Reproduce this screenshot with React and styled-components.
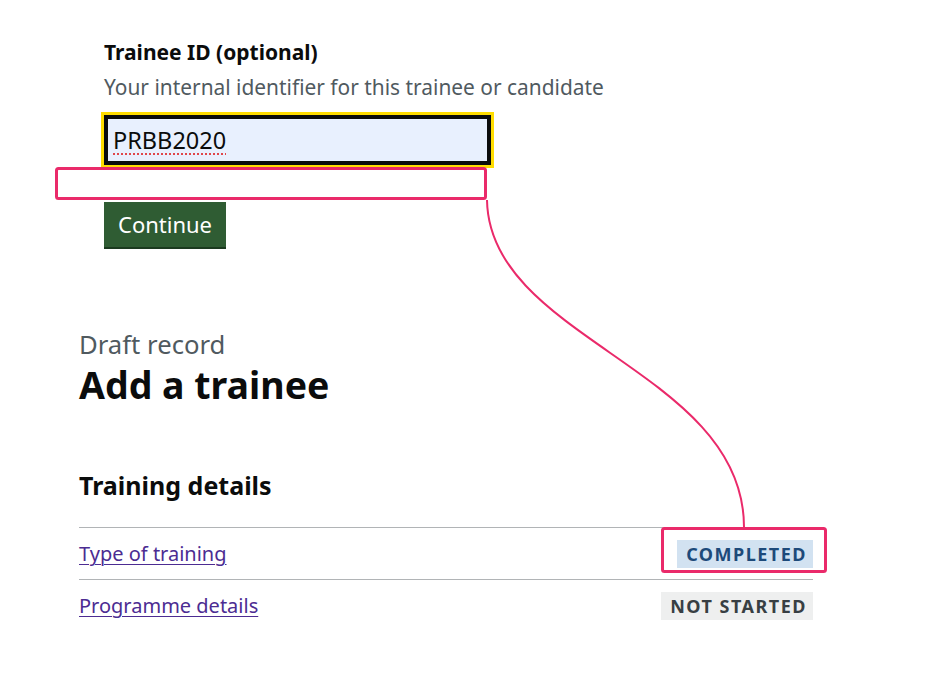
import React from "react";
import styled, { createGlobalStyle } from "styled-components";

const GlobalStyle = createGlobalStyle`
  html, body { margin: 0; padding: 0; background: #ffffff; }
  body { font-family: "Noto Sans", "Liberation Sans", Arial, sans-serif; color: #0b0c0c; }
  * { box-sizing: border-box; }
`;

const Page = styled.div`
  position: relative;
  width: 926px;
  height: 683px;
  overflow: hidden;
  background: #ffffff;
`;

const FormSection = styled.form`
  display: flex;
  flex-direction: column;
  align-items: flex-start;
  padding: 39px 0 0 104px;
  margin: 0;
`;

const Label = styled.label`
  font-size: 21px;
  font-weight: 700;
  line-height: 26px;
`;

const Hint = styled.div`
  margin-top: 10px;
  font-size: 20.9px;
  line-height: 25px;
  color: #505a5f;
`;

const TextInput = styled.input`
  margin-top: 15px;
  width: 387px;
  height: 50px;
  padding: 0 7px;
  border: 2px solid #0b0c0c;
  box-shadow: inset 0 0 0 2px #0b0c0c;
  outline: 3px solid #ffdd00;
  outline-offset: 0;
  background: #e8f0fe;
  font-family: "Noto Sans", "Liberation Sans", Arial, sans-serif;
  font-size: 23.5px;
  color: #0b0c0c;
  text-decoration: underline dotted #e0464a;
  text-decoration-thickness: 2px;
  text-underline-offset: 4px;
`;

const Button = styled.button`
  margin-top: 37px;
  padding: 10px 14px;
  border: 0;
  border-radius: 0;
  background: #2f5c33;
  box-shadow: 0 2px 0 #1b3a1f;
  color: #ffffff;
  font-family: "Noto Sans", "Liberation Sans", Arial, sans-serif;
  font-size: 22px;
  line-height: 25px;
  cursor: pointer;
`;

const RecordSection = styled.section`
  display: flex;
  flex-direction: column;
  width: 734px;
  margin: 0 0 0 79px;
  padding-top: 83px;
`;

const Caption = styled.span`
  font-size: 25.7px;
  line-height: 30px;
  color: #505a5f;
`;

const Heading = styled.h1`
  margin: 3px 0 0;
  font-size: 37.5px;
  line-height: 44px;
  font-weight: 700;
`;

const SubHeading = styled.h2`
  margin: 63px 0 0;
  font-size: 25px;
  line-height: 30px;
  font-weight: 700;
`;

const TaskList = styled.ul`
  list-style: none;
  margin: 27px 0 0;
  padding: 0;
`;

const TaskRow = styled.li`
  display: flex;
  align-items: center;
  justify-content: space-between;
  height: 52px;
  border-top: 1px solid #b1b4b6;
`;

const TaskLink = styled.a`
  font-size: 20px;
  line-height: 25px;
  color: #4c2c92;
  text-decoration: underline;
  text-decoration-thickness: 1px;
  text-underline-offset: 3px;
`;

const Tag = styled.strong`
  display: inline-block;
  padding: 4px 6px 4px 9px;
  font-size: 18px;
  line-height: 20px;
  font-weight: 700;
  letter-spacing: 1.5px;
  text-transform: uppercase;
  color: ${(p) => (p.$status === "done" ? "#1d4a7a" : "#383f43")};
  background: ${(p) => (p.$status === "done" ? "#d2e2f1" : "#eeefef")};
`;

const Overlay = styled.svg`
  position: absolute;
  left: 0;
  top: 0;
  width: 926px;
  height: 683px;
  pointer-events: none;
`;

const PINK = "#ea2a6a";

export default function App() {
  return (
    <Page>
      <GlobalStyle />
      <FormSection onSubmit={(e) => e.preventDefault()}>
        <Label htmlFor="trainee-id">Trainee ID (optional)</Label>
        <Hint>Your internal identifier for this trainee or candidate</Hint>
        <TextInput id="trainee-id" defaultValue="PRBB2020" spellCheck={false} />
        <Button type="submit">Continue</Button>
      </FormSection>

      <RecordSection>
        <Caption>Draft record</Caption>
        <Heading>Add a trainee</Heading>
        <SubHeading>Training details</SubHeading>
        <TaskList>
          <TaskRow>
            <TaskLink href="#">Type of training</TaskLink>
            <Tag $status="done">Completed</Tag>
          </TaskRow>
          <TaskRow>
            <TaskLink href="#">Programme details</TaskLink>
            <Tag $status="todo">Not started</Tag>
          </TaskRow>
        </TaskList>
      </RecordSection>

      <Overlay viewBox="0 0 926 683">
        <rect x="56.5" y="168.5" width="429" height="30" rx="2" fill="none" stroke={PINK} strokeWidth="3" />
        <rect x="662.5" y="528.5" width="163" height="43" rx="2" fill="none" stroke={PINK} strokeWidth="3" />
        <path d="M487 200 C489 340 744 370 744 527" fill="none" stroke={PINK} strokeWidth="2" />
      </Overlay>
    </Page>
  );
}
